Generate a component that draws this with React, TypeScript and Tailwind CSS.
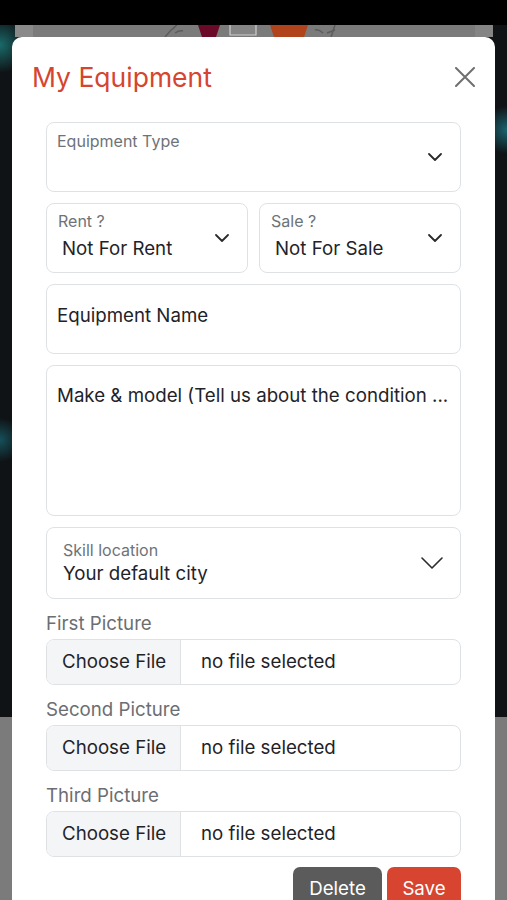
const Chevron = ({ className = "" }: { className?: string }) => (
  <svg viewBox="0 0 14 8" className={className} fill="none" stroke="#2b2b2b" strokeWidth="1.8" strokeLinecap="round" strokeLinejoin="round">
    <path d="M1 1l6 6 6-6" />
  </svg>
);

function SelectBox({ label, value, className = "" }: { label: string; value?: string; className?: string }) {
  return (
    <div className={`flex h-[70px] items-center rounded-[8px] border border-[#dfe2e5] ${className}`}>
      <div className="flex h-full flex-1 flex-col pl-[11px] pt-[7px]">
        <span className="text-[16px] leading-[20px] text-[#6e7378]">{label}</span>
        {value && <span className="mt-[6px] pl-[4px] text-[18.7px] leading-[24px] text-[#1f2328]">{value}</span>}
      </div>
      <Chevron className="mr-[18px] h-[8px] w-[14px]" />
    </div>
  );
}

function FileField({ label }: { label: string }) {
  return (
    <div>
      <div className="mb-[3px] mt-[13px] text-[18.7px] leading-[24px] text-[#6b6e72]">{label}</div>
      <div className="flex h-[46px] overflow-hidden rounded-[8px] border border-[#dfe2e5] text-[18.7px] text-[#1f2328]">
        <div className="flex w-[134px] items-center border-r border-[#dfe2e5] bg-[#f4f5f7] pl-[15px]">Choose File</div>
        <div className="flex items-center pl-[20px]">no file selected</div>
      </div>
    </div>
  );
}

// dimmed strip of the page image peeking above the modal
const BackdropStrip = () => (
  <svg viewBox="0 0 478 12" className="mx-[15px] block h-[12px] w-[478px]">
    <rect width="478" height="12" fill="#7b7b7b" />
    <rect width="18" height="12" fill="#8a8a8a" />
    <rect x="460" width="18" height="12" fill="#858585" />
    <path d="M150 12c4-5 8-9 12-12M160 8c3-2 5-3 8-2" stroke="#5c5c5c" strokeWidth="1.5" fill="none" />
    <path d="M183 0h22l-4 12h-14z" fill="#6a0a28" />
    <path d="M215 0v10h26V0" stroke="#cfcfcf" strokeWidth="1.2" fill="#858585" />
    <path d="M255 0h38l-4 12h-30z" fill="#b0431c" />
    <path d="M300 5c3-1 6 1 8 3M320 0l-4 12M312 8l8-3" stroke="#5c5c5c" strokeWidth="1.5" fill="none" />
  </svg>
);

export default function App() {
  return (
    <div className="min-h-screen w-full overflow-hidden font-['Inter',sans-serif] bg-[radial-gradient(circle_at_0px_45px,#1a6a6a_0px,transparent_28px),radial-gradient(circle_at_507px_130px,#1b6470_0px,transparent_24px),radial-gradient(circle_at_0px_440px,#16505a_0px,transparent_22px),linear-gradient(to_bottom,#000_0px,#000_25px,#0f1316_25px,#0f1316_717px,#7b7b7b_717px,#7b7b7b_100%)]">
      <div className="h-[25px] bg-black" />
      <BackdropStrip />
      <div className="mx-[12px] rounded-t-[10px] bg-white pb-[40px]">
        <div className="flex h-[85px] items-start justify-between pl-[20px] pr-[20px] pt-[24px]">
          <h1 className="text-[26.5px] font-normal leading-[32px] text-[#d5452f]">My Equipment</h1>
          <svg viewBox="0 0 20 20" className="mt-[6px] h-[20px] w-[20px]" fill="none" stroke="#6f6f6f" strokeWidth="2" strokeLinecap="round">
            <path d="M1 1l18 18M19 1L1 19" />
          </svg>
        </div>
        <div className="ml-[34px] mr-[34px] flex flex-col">
          <div className="flex h-[70px] items-center rounded-[8px] border border-[#dfe2e5]">
            <div className="flex h-full flex-1 flex-col pl-[10px] pt-[8px]">
              <span className="text-[16px] leading-[20px] text-[#6e7378]">Equipment Type</span>
            </div>
            <Chevron className="mr-[18px] h-[8px] w-[14px]" />
          </div>
          <div className="mt-[11px] flex gap-[11px]">
            <SelectBox label="Rent ?" value="Not For Rent" className="flex-1" />
            <SelectBox label="Sale ?" value="Not For Sale" className="flex-1" />
          </div>
          <div className="mt-[11px] h-[70px] rounded-[8px] border border-[#dfe2e5] pl-[10px] pt-[19px] text-[18.7px] leading-[24px] text-[#1f2328]">
            Equipment Name
          </div>
          <div className="mt-[11px] h-[151px] rounded-[8px] border border-[#dfe2e5] pl-[10px] pt-[18px] text-[18.7px] leading-[24px] text-[#1f2328]">
            Make &amp; model (Tell us about the condition ...
          </div>
          <div className="mt-[11px] flex h-[72px] items-center rounded-[8px] border border-[#dfe2e5]">
            <div className="flex h-full flex-1 flex-col pl-[16px] pt-[12px]">
              <span className="text-[16px] leading-[20px] text-[#6e7378]">Skill location</span>
              <span className="mt-[2px] text-[18.7px] leading-[24px] text-[#1f2328]">Your default city</span>
            </div>
            <svg viewBox="0 0 22 12" className="mr-[17px] h-[12px] w-[22px]" fill="none" stroke="#2b2b2b" strokeWidth="1.6" strokeLinecap="round" strokeLinejoin="round">
              <path d="M1 1l10 10 10-10" />
            </svg>
          </div>
          <FileField label="First Picture" />
          <FileField label="Second Picture" />
          <FileField label="Third Picture" />
          <div className="mt-[10px] flex justify-end gap-[5px]">
            <button className="h-[48px] w-[89px] rounded-[7px] bg-[#5b5b5b] pb-[4px] text-[18.7px] text-white">Delete</button>
            <button className="h-[48px] w-[74px] rounded-[7px] bg-[#d7442f] pb-[4px] text-[18.7px] text-white">Save</button>
          </div>
        </div>
      </div>
    </div>
  );
}
